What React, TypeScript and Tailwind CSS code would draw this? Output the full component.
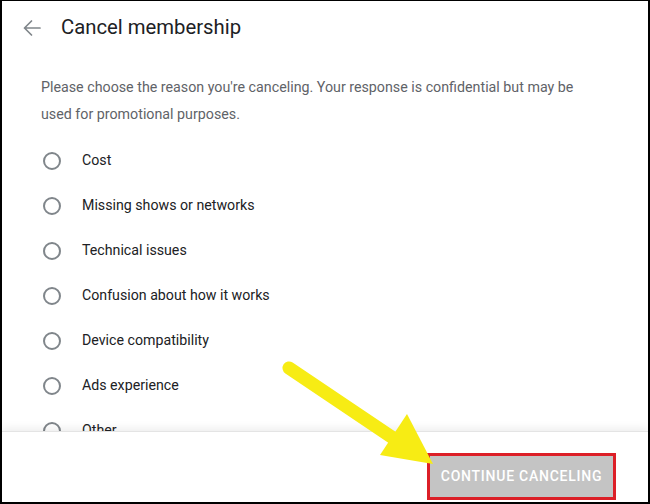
// Cancel membership survey screen with annotation overlay (arrow + highlight box).
const REASONS = [
  "Cost",
  "Missing shows or networks",
  "Technical issues",
  "Confusion about how it works",
  "Device compatibility",
  "Ads experience",
  "Other",
];

function BackArrow() {
  return (
    <svg width="20" height="20" viewBox="0 0 20 20" className="shrink-0">
      <path
        d="M18 10H2.5M9.5 3L2.5 10l7 7"
        fill="none"
        stroke="#80868b"
        strokeWidth="1.7"
        strokeLinecap="round"
        strokeLinejoin="round"
      />
    </svg>
  );
}

function Radio() {
  return (
    <span className="h-[18px] w-[18px] shrink-0 rounded-full border-2 border-[#80868b]" />
  );
}

export default function App() {
  return (
    <div
      className="relative flex h-[504px] w-[650px] flex-col overflow-hidden border-b-2 border-l-2 border-r-2 border-t border-black bg-white"
      style={{ fontFamily: "Roboto, 'Noto Sans', sans-serif" }}
    >
      <div className="flex min-h-0 flex-1 flex-col overflow-hidden">
        <header className="flex h-[53px] shrink-0 items-center gap-[19px] pl-[20px]">
          <BackArrow />
          <h1 className="text-[20.3px] text-[#202124]">Cancel membership</h1>
        </header>

        <p className="mt-[20px] pl-[39px] pr-[50px] text-[14.25px] leading-[27px] text-[#5f6368]">
          Please choose the reason you're canceling. Your response is confidential but may be
          used for promotional purposes.
        </p>

        <ul className="mt-[10px] flex flex-col">
          {REASONS.map((r) => (
            <li key={r} className="flex h-[45px] shrink-0 items-center gap-[21px] pl-[41px]">
              <Radio />
              <span className="text-[14.2px] text-[#202124]">{r}</span>
            </li>
          ))}
        </ul>
      </div>

      <footer className="relative z-10 flex h-[71px] shrink-0 items-end justify-end border-t border-[#e4e4e4] pb-[2px] pr-[32px] shadow-[0_-3px_8px_rgba(0,0,0,0.07)]">
        <div className="border-[3px] border-[#dc1f27]">
          <button className="h-[41px] w-[183px] bg-[#c4c4c4] text-[14px] font-medium tracking-[0.75px] text-white">
            CONTINUE CANCELING
          </button>
        </div>
      </footer>

      {/* annotation arrow */}
      <svg
        className="pointer-events-none absolute left-0 top-0 z-20"
        width="650"
        height="504"
        viewBox="-2 -1 650 504"
      >
        <line
          x1="285"
          y1="366"
          x2="392"
          y2="438"
          stroke="#f7ec14"
          strokeWidth="13"
          strokeLinecap="round"
        />
        <polygon points="376,453 403,412 429,462" fill="#f7ec14" />
      </svg>
    </div>
  );
}
